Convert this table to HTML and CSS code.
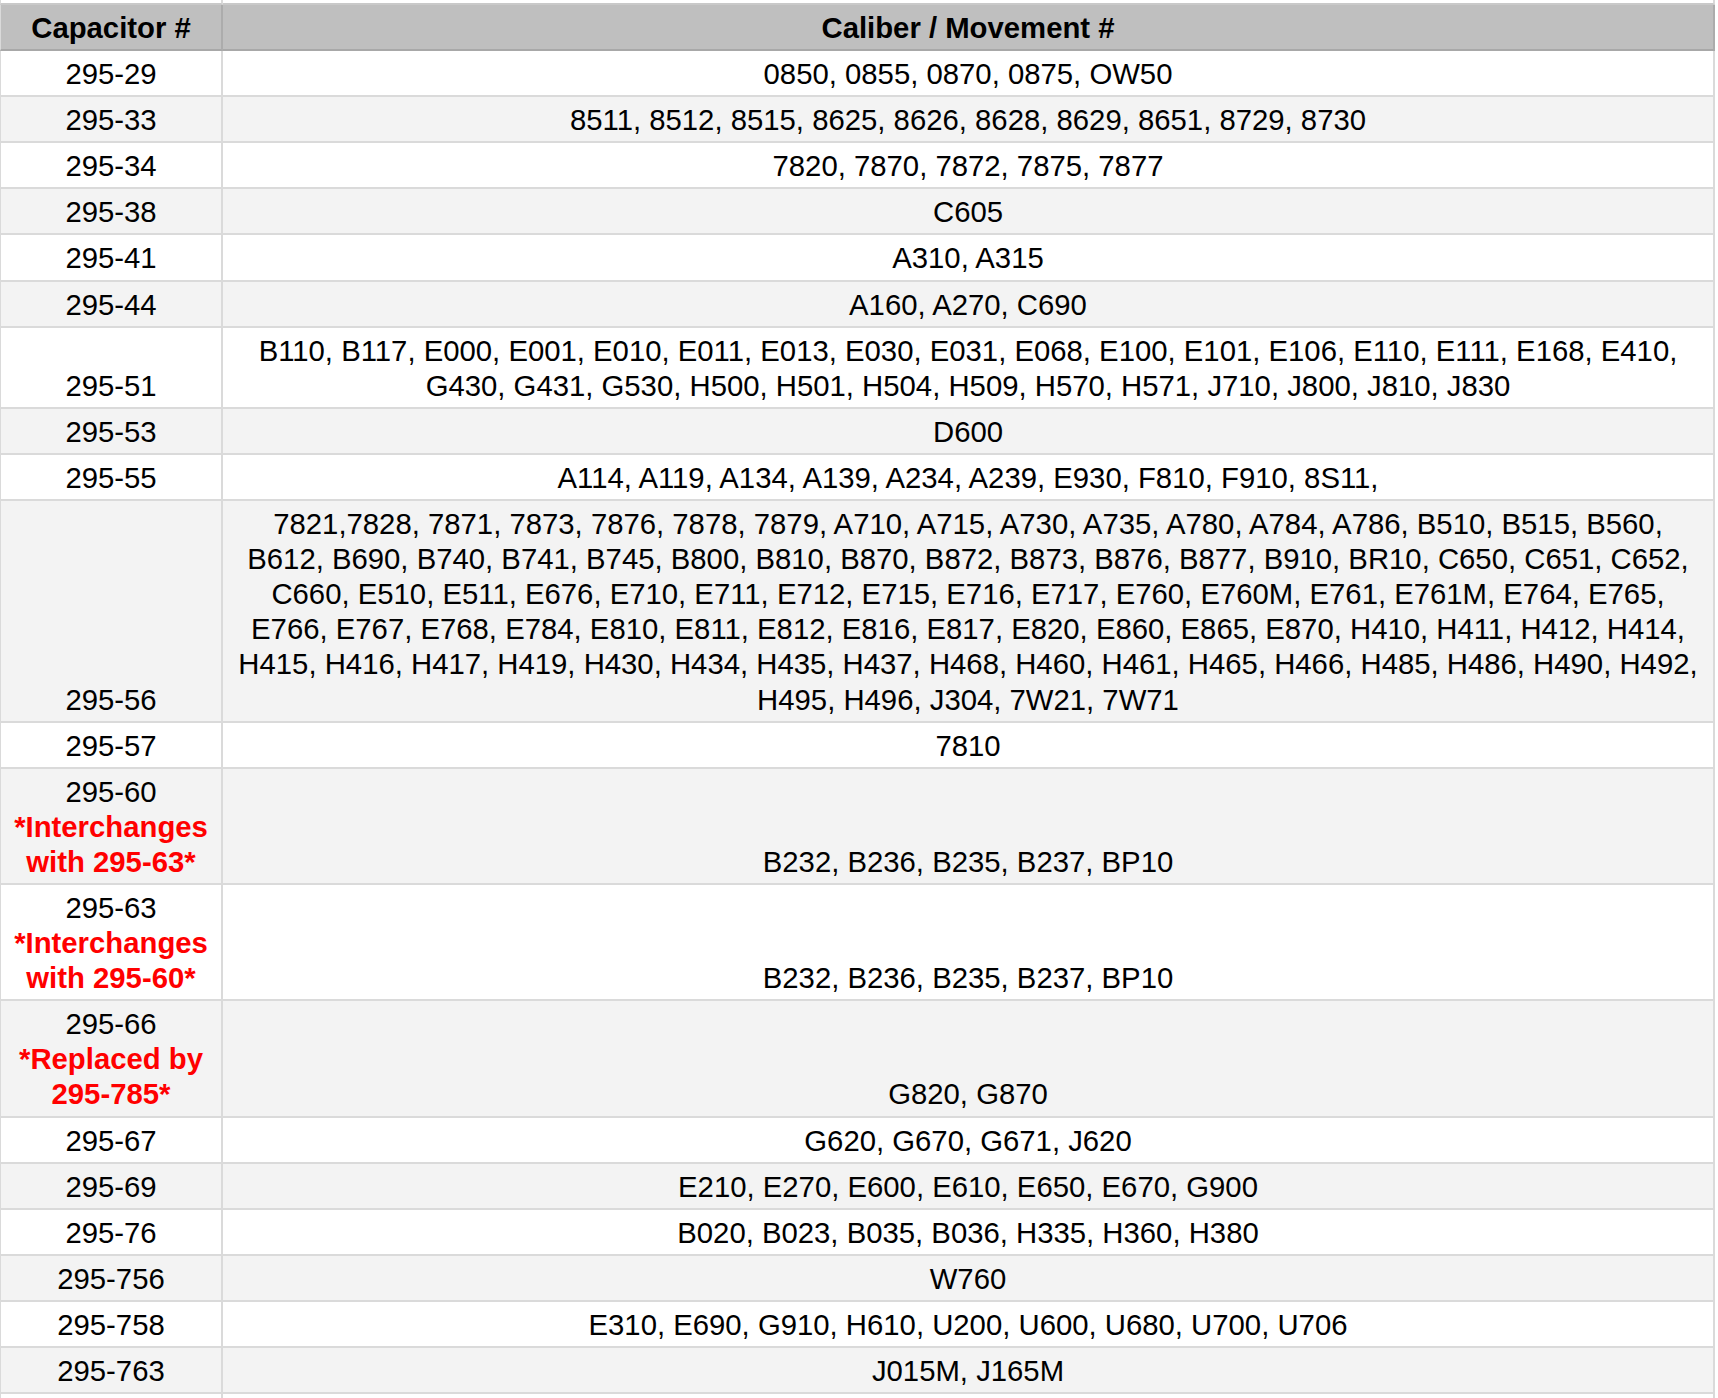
FILE: index.html
```html
<!DOCTYPE html>
<html>
<head>
<meta charset="utf-8">
<title>Capacitor Caliber Chart</title>
<link rel="stylesheet" href="styles.css">
</head>
<body>
<div class="sheet">
  <div class="cell stub"></div><div class="cell stub"></div>
  <div class="cell hd">Capacitor #</div><div class="cell hd">Caliber / Movement #</div>

  <div class="cell">295-29</div><div class="cell">0850, 0855, 0870, 0875, OW50</div>
  <div class="cell alt">295-33</div><div class="cell alt">8511, 8512, 8515, 8625, 8626, 8628, 8629, 8651, 8729, 8730</div>
  <div class="cell">295-34</div><div class="cell">7820, 7870, 7872, 7875, 7877</div>
  <div class="cell alt">295-38</div><div class="cell alt">C605</div>
  <div class="cell">295-41</div><div class="cell">A310, A315</div>
  <div class="cell alt">295-44</div><div class="cell alt">A160, A270, C690</div>
  <div class="cell">295-51</div><div class="cell">B110, B117, E000, E001, E010, E011, E013, E030, E031, E068, E100, E101, E106, E110, E111, E168, E410, G430, G431, G530, H500, H501, H504, H509, H570, H571, J710, J800, J810, J830</div>
  <div class="cell alt">295-53</div><div class="cell alt">D600</div>
  <div class="cell">295-55</div><div class="cell">A114, A119, A134, A139, A234, A239, E930, F810, F910, 8S11,</div>
  <div class="cell alt">295-56</div><div class="cell alt">7821,7828, 7871, 7873, 7876, 7878, 7879, A710, A715, A730, A735, A780, A784, A786, B510, B515, B560, B612, B690, B740, B741, B745, B800, B810, B870, B872, B873, B876, B877, B910, BR10, C650, C651, C652, C660, E510, E511, E676, E710, E711, E712, E715, E716, E717, E760, E760M, E761, E761M, E764, E765, E766, E767, E768, E784, E810, E811, E812, E816, E817, E820, E860, E865, E870, H410, H411, H412, H414, H415, H416, H417, H419, H430, H434, H435, H437, H468, H460, H461, H465, H466, H485, H486, H490, H492, H495, H496, J304, 7W21, 7W71</div>
  <div class="cell">295-57</div><div class="cell">7810</div>
  <div class="cell alt">295-60<span class="note">*Interchanges with 295-63*</span></div><div class="cell alt">B232, B236, B235, B237, BP10</div>
  <div class="cell">295-63<span class="note">*Interchanges with 295-60*</span></div><div class="cell">B232, B236, B235, B237, BP10</div>
  <div class="cell alt">295-66<span class="note">*Replaced by 295-785*</span></div><div class="cell alt">G820, G870</div>
  <div class="cell">295-67</div><div class="cell">G620, G670, G671, J620</div>
  <div class="cell alt">295-69</div><div class="cell alt">E210, E270, E600, E610, E650, E670, G900</div>
  <div class="cell">295-76</div><div class="cell">B020, B023, B035, B036, H335, H360, H380</div>
  <div class="cell alt">295-756</div><div class="cell alt">W760</div>
  <div class="cell">295-758</div><div class="cell">E310, E690, G910, H610, U200, U600, U680, U700, U706</div>
  <div class="cell alt">295-763</div><div class="cell alt">J015M, J165M</div>
  <div class="cell">&nbsp;</div><div class="cell">&nbsp;</div>
</div>
</body>
</html>
```
FILE: styles.css
```css
html, body {
  margin: 0;
  padding: 0;
  background: #ffffff;
}

body {
  font-family: "Liberation Sans", Arial, Helvetica, sans-serif;
  font-size: 29.3px;
  line-height: 35.1px;
  color: #000000;
  overflow: hidden;
}

.sheet {
  display: grid;
  grid-template-columns: 223px 1492px;
  width: 1715px;
}

.cell {
  box-sizing: border-box;
  display: flex;
  flex-direction: column;
  justify-content: flex-end;
  align-items: center;
  text-align: center;
  padding: 5px 6px 4px;
  background: #ffffff;
  border-right: 2px solid #dadada;
  border-bottom: 2px solid #dadada;
}

.cell:nth-child(odd) {
  border-left: 1px solid #dadada;
}

.cell:nth-child(even) {
  padding-left: 10px;
  padding-right: 10px;
}

.cell.alt {
  background: #f3f3f3;
}

.cell.stub {
  height: 5px;
  padding: 0;
  border-bottom-color: #c9c9c9;
}

.cell.hd {
  background: #bfbfbf;
  font-weight: bold;
  padding-top: 5px;
  padding-bottom: 4px;
  border-bottom-color: #a8a8a8;
  border-right-color: #acacac;
}

.note {
  display: block;
  color: #ff0000;
  font-weight: bold;
}
```
